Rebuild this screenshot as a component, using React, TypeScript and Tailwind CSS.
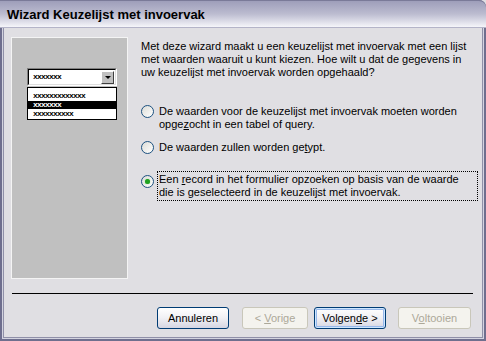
import React from 'react'

const ui = { fontFamily: '"Liberation Sans", Arial, sans-serif' }
const mono = { fontFamily: '"Liberation Mono", "Courier New", monospace' }

function Glyphs({ n, light }: { n: number; light?: boolean }) {
  return (
    <span
      className={`block text-[8px] leading-[8px] font-bold tracking-[-0.8px] ${light ? 'text-white' : 'text-black'}`}
      style={mono}
    >
      {'x'.repeat(n)}
    </span>
  )
}

function Radio({ checked }: { checked?: boolean }) {
  return (
    <span className="w-[13px] h-[13px] shrink-0 rounded-full border border-[#1c5180] bg-gradient-to-br from-[#dcdcd7] to-white flex items-center justify-center">
      {checked && <span className="w-[5px] h-[5px] rounded-full bg-[#21a121] shadow-[0_0_1px_#5ed35e]" />}
    </span>
  )
}

function XpButton({
  children,
  width,
  disabled,
  primary,
}: {
  children: React.ReactNode
  width: string
  disabled?: boolean
  primary?: boolean
}) {
  if (disabled) {
    return (
      <div
        className={`${width} h-[22px] rounded-[3px] border border-[#c9c7ba] bg-[#f4f3ee] text-[#aca899] text-[11px] flex items-center justify-center`}
      >
        <span className="whitespace-pre">{children}</span>
      </div>
    )
  }
  return (
    <div
      className={`${width} h-[22px] rounded-[3px] border border-[#003c74] bg-gradient-to-b from-white via-[#f0f0f4] to-[#d6d6e2] text-black text-[11px] flex items-center justify-center ${
        primary ? 'shadow-[inset_0_0_0_1px_#cee7ff,inset_0_0_0_2px_#98b8ea]' : ''
      }`}
    >
      <span className="whitespace-pre">{children}</span>
    </div>
  )
}

export default function App() {
  return (
    <div className="w-[486px] h-[341px] bg-[#e0dfe3] overflow-hidden" style={ui}>
      <div className="w-[486px] h-[341px] flex flex-col bg-[#6f6f8e] rounded-tr-[7px] px-[2px] pb-[2px]">
        {/* Title bar */}
        <div className="h-[28px] -mx-[2px] rounded-tr-[7px] border-t border-[#7a7a98] bg-gradient-to-b from-[#9e9eba] via-[#bcbcd0] to-[#f6f6fa] border-b border-b-[#b4b4c8] flex items-center pl-[7px]">
          <span className="text-[13px] font-bold text-black leading-none">Wizard Keuzelijst met invoervak</span>
        </div>

        {/* Frame */}
        <div className="flex-1 flex flex-col border-x border-b border-[#d4d4e0]">
          <div className="flex-1 flex flex-col border-x border-b border-[#9090a8] bg-[#e0dfe3]">
            <div className="flex pl-[7px] pt-[9px]">
              {/* Left picture panel */}
              <div className="w-[117px] h-[242px] shrink-0 border border-[#f4f4f4] bg-[#c0c0c0] pt-[30px] pl-[15px]">
                <div className="w-[90px] h-[18px] border-t border-l border-[#808080] border-r border-b border-r-white border-b-white">
                  <div className="h-full flex items-center border-t border-l border-black border-r border-b border-r-[#dfdfdf] border-b-[#dfdfdf] bg-white pl-[4px] pr-[1px]">
                    <div className="flex-1">
                      <Glyphs n={7} />
                    </div>
                    <div className="w-[13px] h-[13px] bg-[#c0c0c0] border-t border-l border-white border-r border-b border-r-[#404040] border-b-[#404040] flex items-center justify-center">
                      <span className="w-0 h-0 border-l-[3px] border-r-[3px] border-t-[3px] border-l-transparent border-r-transparent border-t-black" />
                    </div>
                  </div>
                </div>
                <div className="w-[90px] mt-[1px] border border-black bg-white pt-[4px] pb-[1px]">
                  <div className="h-[8px] pl-[5px]">
                    <Glyphs n={13} />
                  </div>
                  <div className="h-[8px] mt-[1px] pl-[5px] bg-black">
                    <Glyphs n={7} light />
                  </div>
                  <div className="h-[8px] mt-[1px] pl-[5px]">
                    <Glyphs n={10} />
                  </div>
                </div>
              </div>

              {/* Right content */}
              <div className="ml-[13px] w-[337px] flex flex-col text-[11px] leading-[13px] text-black">
                <p className="mt-[3px]">
                  Met deze wizard maakt u een keuzelijst met invoervak met een lijst
                  <br />
                  met waarden waaruit u kunt kiezen. Hoe wilt u dat de gegevens in
                  <br />
                  uw keuzelijst met invoervak worden opgehaald?
                </p>

                <div className="mt-[26px] flex items-start gap-[4px]">
                  <Radio />
                  <p className="pl-[1px]">
                    De waarden voor de keuzelijst met invoervak moeten worden
                    <br />
                    opge<span className="underline">z</span>ocht in een tabel of query.
                  </p>
                </div>

                <div className="mt-[10px] flex items-start gap-[4px]">
                  <Radio />
                  <p className="pl-[1px]">
                    De waarden zullen worden ge<span className="underline">t</span>ypt.
                  </p>
                </div>

                <div className="mt-[17px] flex items-start gap-[3px]">
                  <span className="mt-[4px]">
                    <Radio checked />
                  </span>
                  <p className="flex-1 border border-dotted border-black px-[1px] py-[1px]">
                    Een <span className="underline">r</span>ecord in het formulier opzoeken op basis van de waarde
                    <br />
                    die is geselecteerd in de keuzelijst met invoervak.
                  </p>
                </div>
              </div>
            </div>

            {/* Separator */}
            <div className="mt-[14px] ml-[8px] mr-[9px] h-px bg-black" />

            {/* Buttons */}
            <div className="mt-[13px] flex items-center pl-[153px]">
              <XpButton width="w-[72px]">Annuleren</XpButton>
              <div className="ml-[13px]">
                <XpButton width="w-[66px]" disabled>
                  {'< '}
                  <span className="underline">V</span>orige
                </XpButton>
              </div>
              <div className="ml-[6px]">
                <XpButton width="w-[72px]" primary>
                  Volgen<span className="underline">d</span>
                  {'e >'}
                </XpButton>
              </div>
              <div className="ml-[12px]">
                <XpButton width="w-[73px]" disabled>
                  V<span className="underline">o</span>ltooien
                </XpButton>
              </div>
            </div>
          </div>
        </div>
      </div>
    </div>
  )
}
